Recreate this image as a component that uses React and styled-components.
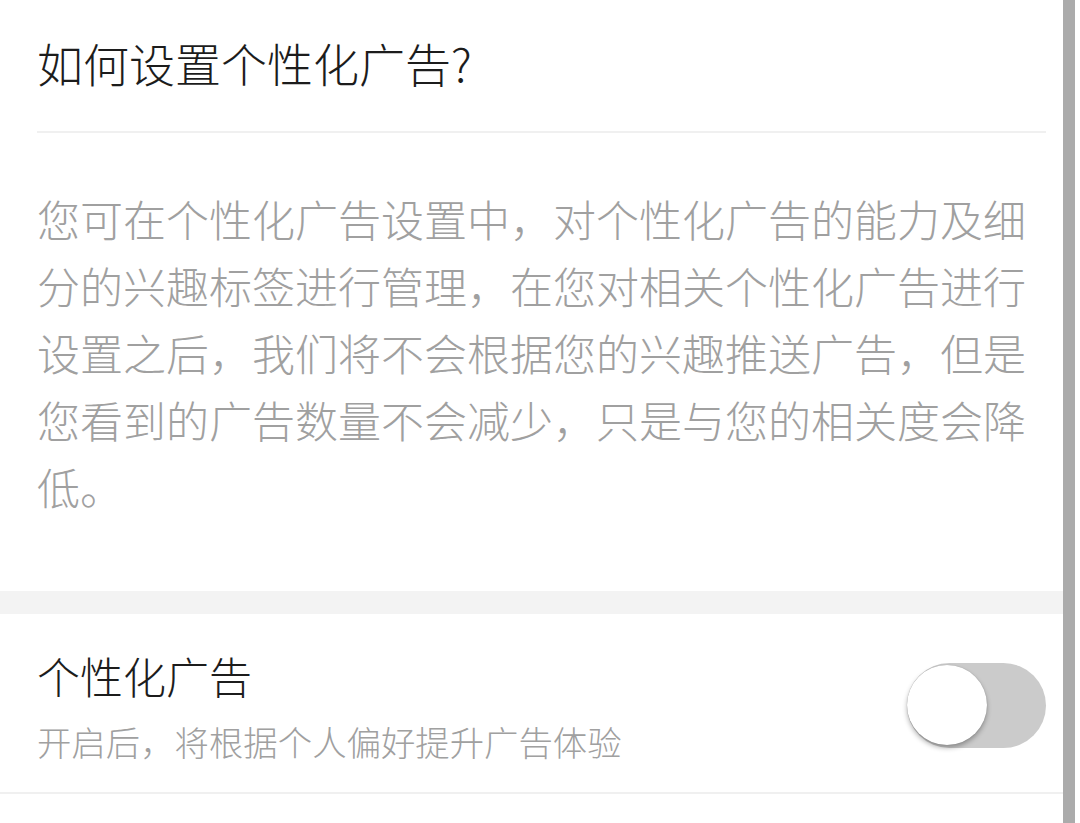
import React, { useState } from "react";
import styled, { createGlobalStyle } from "styled-components";

const GlobalStyle = createGlobalStyle`
  html, body {
    margin: 0;
    padding: 0;
    background: #ffffff;
  }
  body {
    font-family: "Noto Sans CJK SC", "Noto Sans", sans-serif;
    -webkit-font-smoothing: antialiased;
  }
`;

export default function App() {
  const [on, setOn] = useState(false);

  return (
    <>
      <GlobalStyle />
      <SPage>
        <SContent>
          <SHeader>
            <h1>如何设置个性化广告?</h1>
          </SHeader>
          <SBody>
            <p>
              您可在个性化广告设置中，对个性化广告的能力及细分的兴趣标签进行管理，在您对相关个性化广告进行设置之后，我们将不会根据您的兴趣推送广告，但是您看到的广告数量不会减少，只是与您的相关度会降低。
            </p>
          </SBody>
          <SBand />
          <SRow>
            <SRowText>
              <h2>个性化广告</h2>
              <p>开启后，将根据个人偏好提升广告体验</p>
            </SRowText>
            <SSwitch $on={on} onClick={() => setOn(!on)} aria-label="个性化广告">
              <span />
            </SSwitch>
          </SRow>
        </SContent>
        <SScrollbar />
      </SPage>
    </>
  );
}

const SPage = styled.div`
  display: flex;
  width: 1080px;
  height: 823px;
  overflow: hidden;
  background: #fff;
`;

const SContent = styled.div`
  width: 1063px;
  display: flex;
  flex-direction: column;
`;

const SHeader = styled.div`
  padding: 39px 17px 0 37px;

  h1 {
    margin: 0;
    padding-bottom: 46px;
    border-bottom: 2px solid #f0f0f0;
    font-size: 46px;
    line-height: 46px;
    font-weight: 300;
    color: #1c1c1c;
  }
`;

const SBody = styled.div`
  padding: 52px 17px 71px 37px;

  p {
    margin: 0;
    font-size: 43px;
    line-height: 67px;
    font-weight: 300;
    color: #a0a0a0;
    word-break: break-all;
  }
`;

const SBand = styled.div`
  height: 23px;
  background: #f3f3f3;
`;

const SRow = styled.div`
  display: flex;
  align-items: center;
  justify-content: space-between;
  padding: 35px 17px 29px 37px;
  border-bottom: 2px solid #f0f0f0;
`;

const SRowText = styled.div`
  display: flex;
  flex-direction: column;
  gap: 18px;

  h2 {
    margin: 0;
    font-size: 43px;
    line-height: 52px;
    font-weight: 300;
    color: #1c1c1c;
  }

  p {
    margin: 0;
    font-size: 34.4px;
    line-height: 44px;
    font-weight: 300;
    color: #a0a0a0;
  }
`;

const SSwitch = styled.button`
  position: relative;
  flex: none;
  width: 139px;
  height: 85px;
  margin-top: -2px;
  padding: 0;
  border: none;
  border-radius: 43px;
  background: ${(p) => (p.$on ? "#3d7eff" : "#cbcbcb")};
  cursor: pointer;

  span {
    position: absolute;
    top: 2px;
    left: ${(p) => (p.$on ? "59px" : "0")};
    width: 80px;
    height: 80px;
    border-radius: 50%;
    background: #fff;
    box-shadow: 0 3px 5px rgba(0, 0, 0, 0.3), 0 0 1px rgba(0, 0, 0, 0.25);
  }
`;

const SScrollbar = styled.div`
  width: 12px;
  height: 100%;
  background: #ababab;
`;
